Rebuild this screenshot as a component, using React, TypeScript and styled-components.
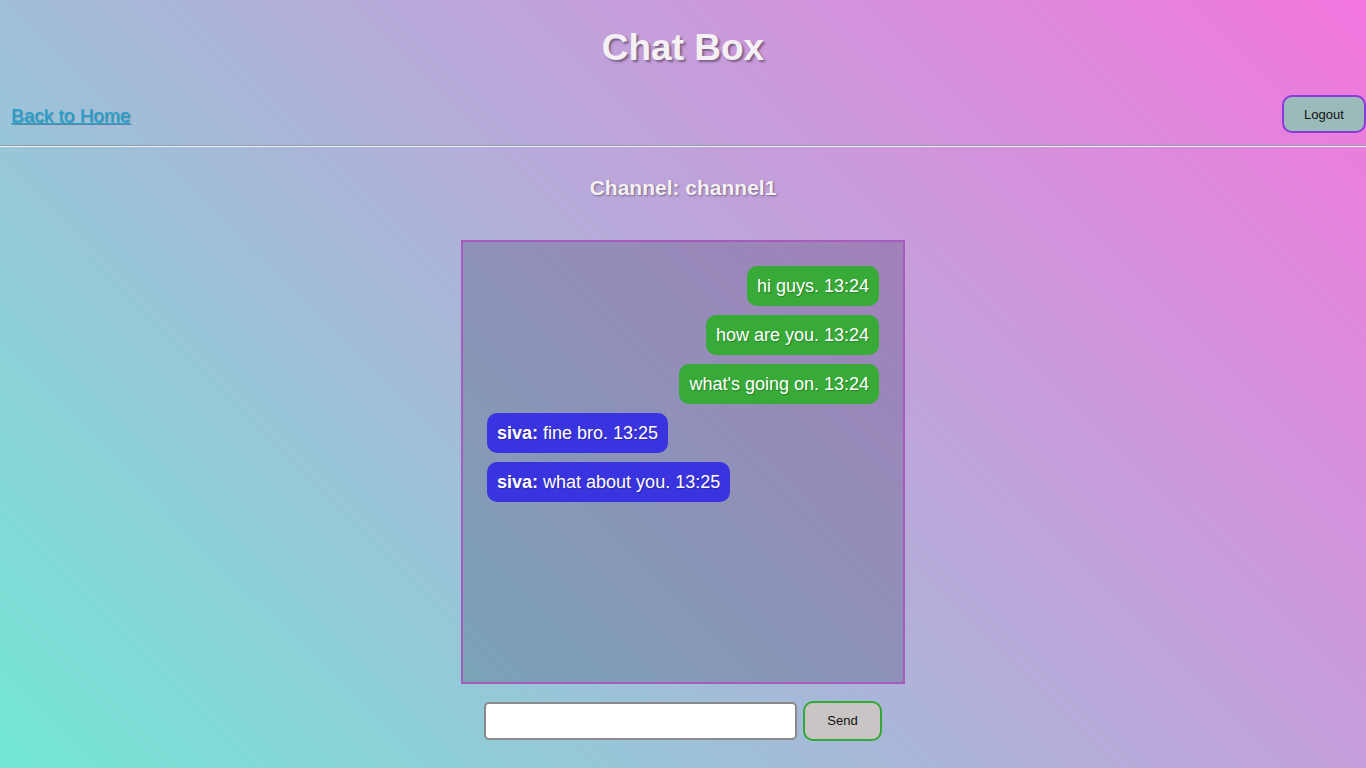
import * as React from "react";
import styled, { createGlobalStyle } from "styled-components";

const GlobalStyle = createGlobalStyle`
  html, body {
    margin: 0;
    padding: 0;
  }
  body {
    font-family: "Liberation Sans", Arial, sans-serif;
    min-height: 100vh;
    background: linear-gradient(45deg, #72e7d5 0%, #f376de 100%);
    background-attachment: fixed;
  }
`;

const Page = styled.div`
  min-height: 768px;
  display: flex;
  flex-direction: column;
`;

const Title = styled.h1`
  margin: 0;
  padding-top: 26px;
  text-align: center;
  font-size: 37px;
  line-height: 43px;
  font-weight: bold;
  color: #f4f0f4;
  text-shadow: 2px 2px 2px rgba(60, 50, 70, 0.55);
`;

const TopBar = styled.div`
  display: flex;
  justify-content: space-between;
  align-items: center;
  padding: 0 0 0 11px;
  margin-top: 25px;
  height: 40px;
`;

const HomeLink = styled.a`
  font-size: 19px;
  margin-top: 4px;
  color: #22a2d2;
  text-decoration: underline;
  text-shadow: 1px 1px 1px rgba(20, 60, 90, 0.45);
  cursor: pointer;
`;

const LogoutButton = styled.button`
  width: 84px;
  height: 38px;
  border: 2px solid #8a3ad8;
  border-radius: 10px;
  background: #9bbbbb;
  font-family: "Liberation Sans", Arial, sans-serif;
  font-size: 13px;
  color: #111;
`;

const Divider = styled.hr`
  margin: 11px 0 0;
  border: none;
  border-top: 1px solid #8c9aa6;
  border-bottom: 1px solid #f2f2f4;
`;

const ChannelName = styled.h3`
  margin: 29px 0 0;
  text-align: center;
  font-size: 21px;
  line-height: 24px;
  font-weight: bold;
  color: #f4f0f4;
  text-shadow: 1px 1px 2px rgba(60, 50, 70, 0.55);
`;

const ChatWindow = styled.div`
  align-self: center;
  margin-top: 40px;
  border: 2px solid #a65cbc;
  background: rgba(40, 40, 80, 0.24);
  padding: 24px 24px;
  box-sizing: border-box;
  width: 444px;
  height: 444px;
  display: flex;
  flex-direction: column;
  gap: 9px;
  overflow-y: auto;
`;

const Bubble = styled.div<{ $mine: boolean }>`
  align-self: ${(p) => (p.$mine ? "flex-end" : "flex-start")};
  background: ${(p) => (p.$mine ? "#38aa38" : "#3a34e0")};
  color: #fff;
  font-size: 18px;
  line-height: 20px;
  padding: 10px 10px;
  border-radius: 10px;
  text-shadow: 1px 1px 1px rgba(0, 0, 0, 0.25);
`;

const Sender = styled.b`
  font-weight: bold;
`;

const InputRow = styled.div`
  display: flex;
  justify-content: center;
  align-items: center;
  gap: 6px;
  margin-top: 17px;
`;

const MessageInput = styled.input`
  width: 313px;
  height: 38px;
  box-sizing: border-box;
  border: 2px solid #8a8a8a;
  border-radius: 5px;
  background: #fff;
  font-size: 16px;
  padding: 0 6px;
  outline: none;
`;

const SendButton = styled.button`
  width: 79px;
  height: 40px;
  border: 2px solid #33a833;
  border-radius: 10px;
  background: #c9c5c5;
  font-family: "Liberation Sans", Arial, sans-serif;
  font-size: 13px;
  line-height: 14px;
  padding-bottom: 2px;
  color: #111;
`;

const messages = [
  { mine: true, text: "hi guys. 13:24" },
  { mine: true, text: "how are you. 13:24" },
  { mine: true, text: "what's going on. 13:24" },
  { mine: false, from: "siva", text: "fine bro. 13:25" },
  { mine: false, from: "siva", text: "what about you. 13:25" },
];

const App: React.FC = () => {
  return (
    <>
      <GlobalStyle />
      <Page>
        <Title>Chat Box</Title>
        <TopBar>
          <HomeLink>Back to Home</HomeLink>
          <LogoutButton>Logout</LogoutButton>
        </TopBar>
        <Divider />
        <ChannelName>Channel: channel1</ChannelName>
        <ChatWindow>
          {messages.map((m, i) => (
            <Bubble key={i} $mine={m.mine}>
              {m.from ? <Sender>{m.from}: </Sender> : null}
              {m.text}
            </Bubble>
          ))}
        </ChatWindow>
        <InputRow>
          <MessageInput autoFocus />
          <SendButton>Send</SendButton>
        </InputRow>
      </Page>
    </>
  );
};

export default App;
